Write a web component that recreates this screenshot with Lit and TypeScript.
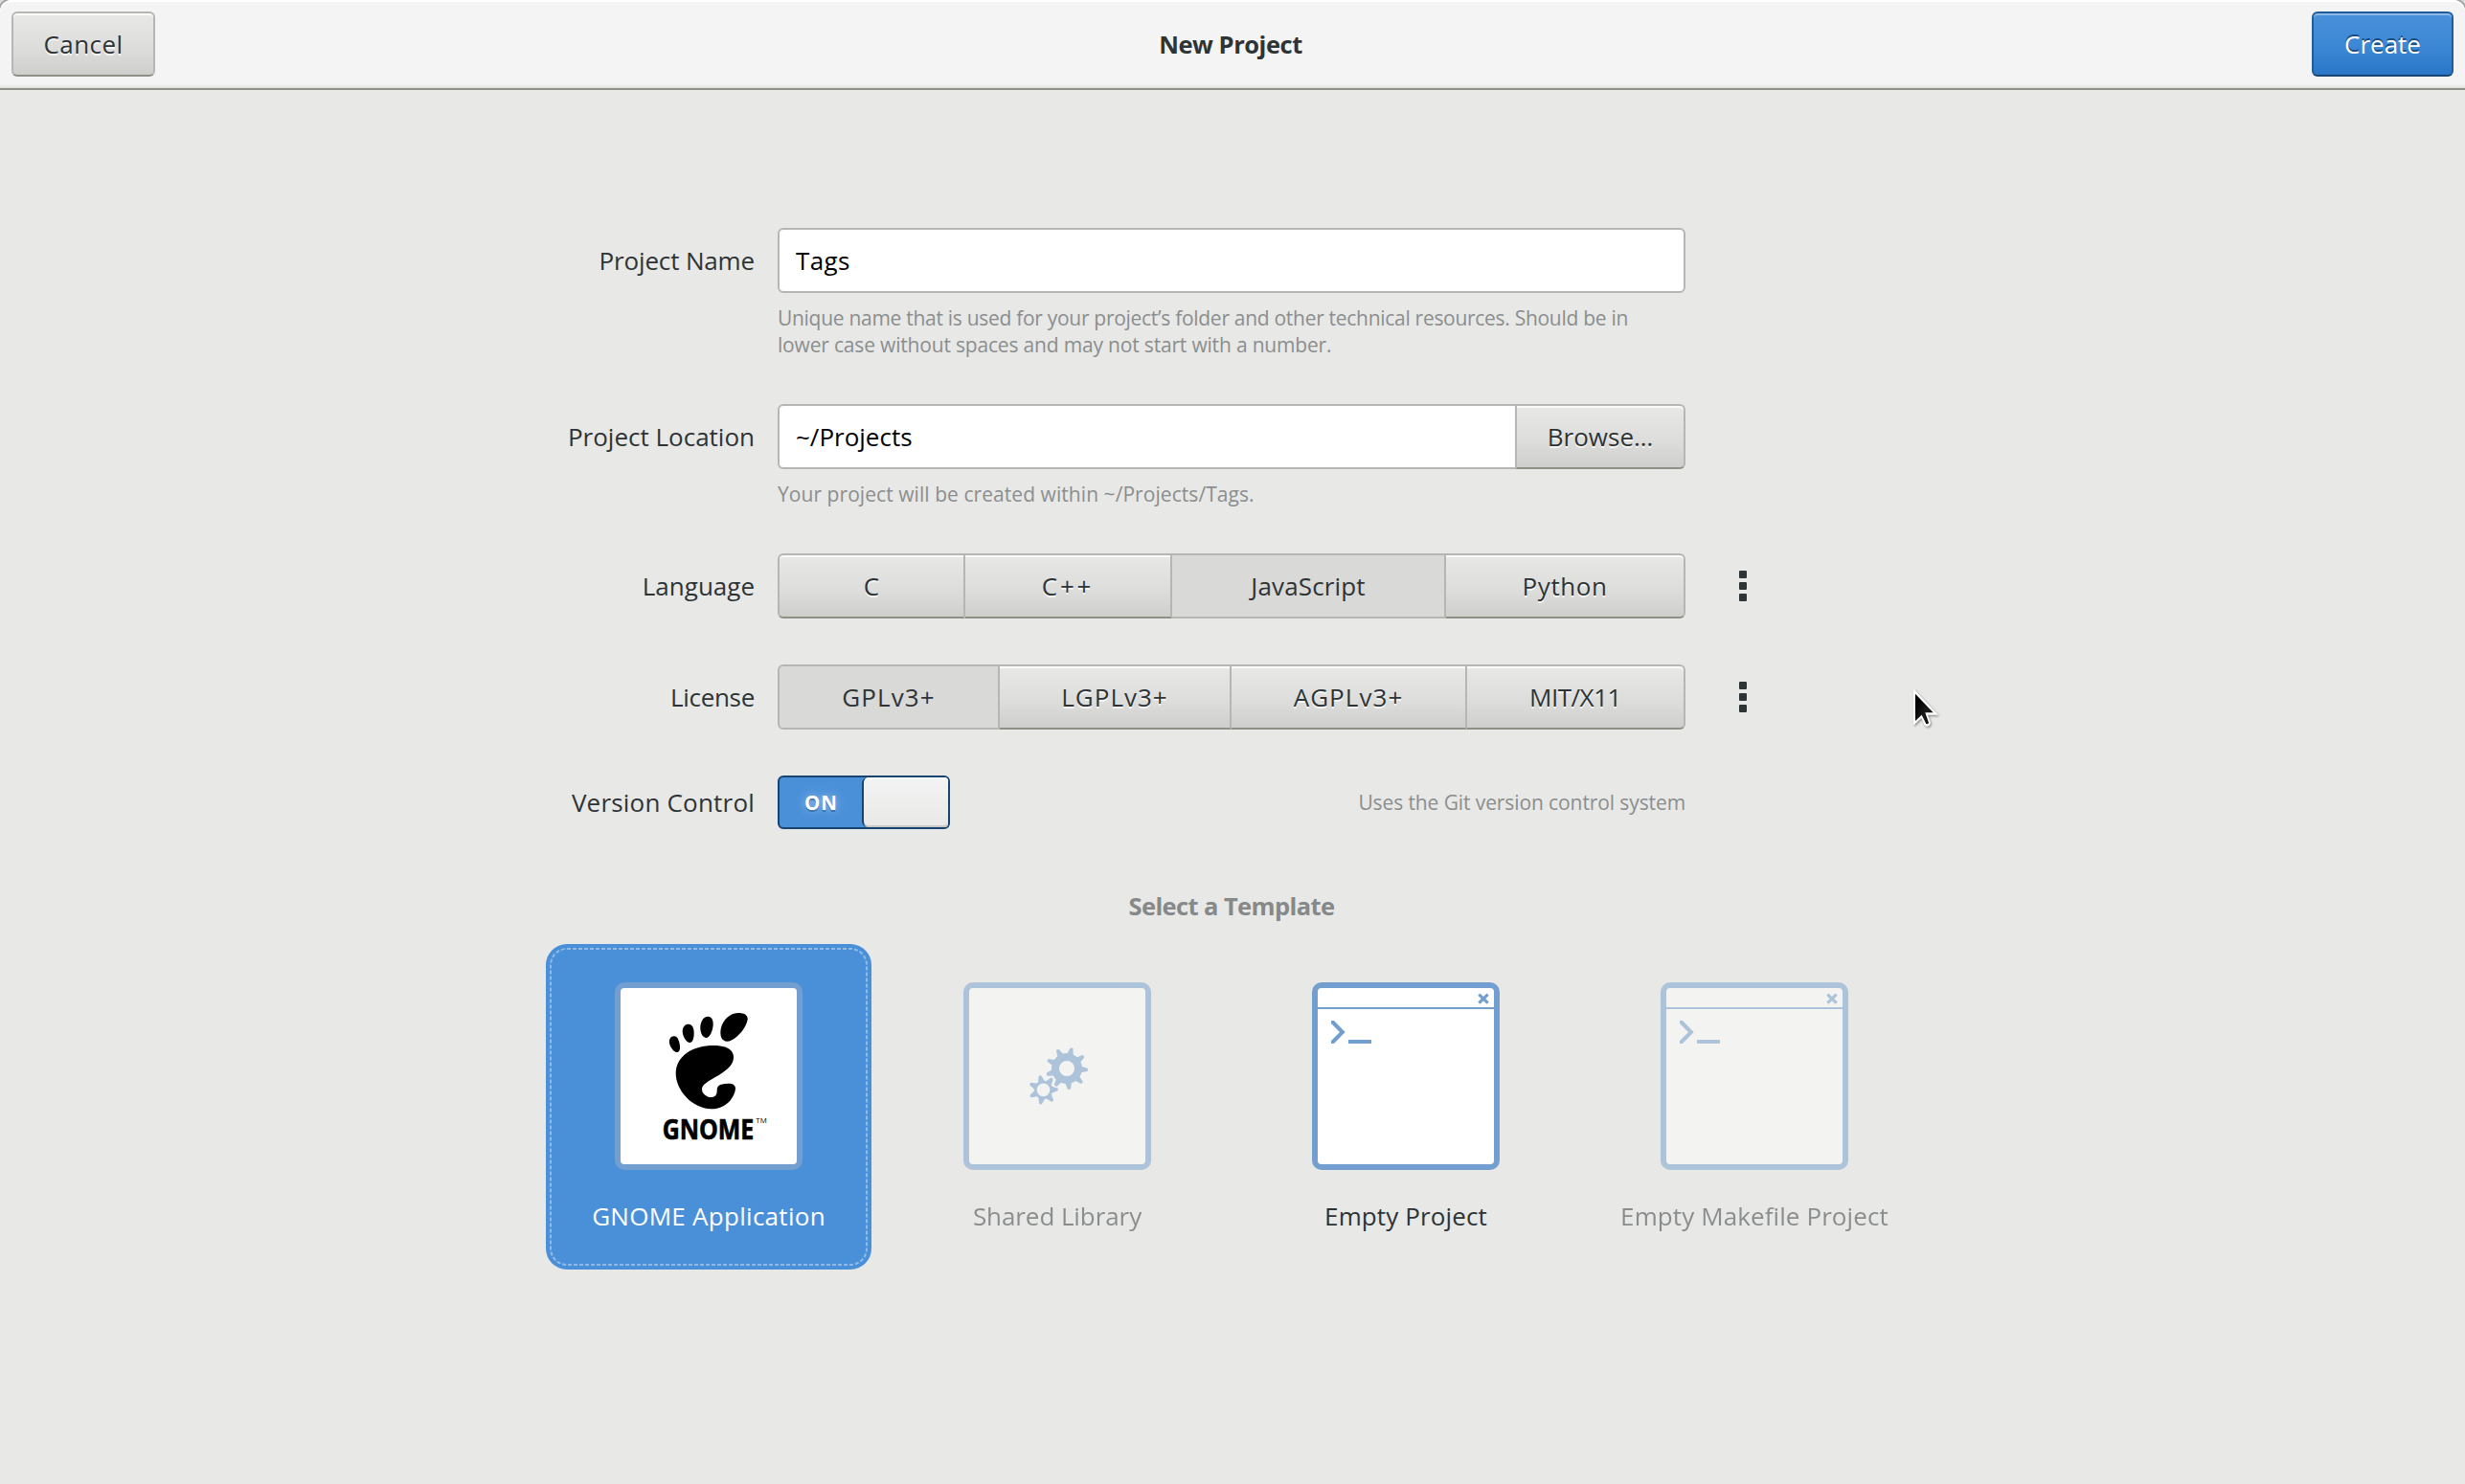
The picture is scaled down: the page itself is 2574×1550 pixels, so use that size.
import { LitElement, html, css, svg } from "lit";
import { customElement, property, state } from "lit/decorators.js";
import { classMap } from "lit/directives/class-map.js";

interface Segment {
  label: string;
  width: number;
  tracking: number;
}

interface Template {
  name: string;
  icon: "gnome" | "gears" | "terminal";
  enabled: boolean;
  tracking: number;
}

const LANGUAGES: Segment[] = [
  { label: "C", width: 196, tracking: 0 },
  { label: "C++", width: 216, tracking: 2.8 },
  { label: "JavaScript", width: 286, tracking: 0.15 },
  { label: "Python", width: 250, tracking: 0.55 },
];

const LICENSES: Segment[] = [
  { label: "GPLv3+", width: 232, tracking: 1.1 },
  { label: "LGPLv3+", width: 242, tracking: 1 },
  { label: "AGPLv3+", width: 246, tracking: 1.05 },
  { label: "MIT/X11", width: 228, tracking: -0.5 },
];

const TEMPLATES: Template[] = [
  { name: "GNOME Application", icon: "gnome", enabled: true, tracking: 0.28 },
  { name: "Shared Library", icon: "gears", enabled: false, tracking: -0.08 },
  { name: "Empty Project", icon: "terminal", enabled: true, tracking: 0.12 },
  { name: "Empty Makefile Project", icon: "terminal", enabled: false, tracking: 0.1 },
];

/** Outline of a cog: wide tooth roots on the body circle, narrow flat tips. */
function cog(cx: number, cy: number, outer: number, body: number, hole: number,
  teeth: number, start: number, tip: number, root: number): string {
  const at = (r: number, a: number) => {
    const t = (a * Math.PI) / 180;
    return `${(cx + r * Math.cos(t)).toFixed(1)} ${(cy + r * Math.sin(t)).toFixed(1)}`;
  };
  let d = "";
  for (let i = 0; i < teeth; i++) {
    const a = start + (i * 360) / teeth;
    const next = a + 360 / teeth;
    d += `${i ? "L" : "M"}${at(body, a - root)}L${at(outer - 2, a - tip)}L${at(outer, a - tip / 2)}`;
    d += `L${at(outer, a + tip / 2)}L${at(outer - 2, a + tip)}L${at(body, a + root)}`;
    d += `A${body} ${body} 0 0 1 ${at(body, next - root)}`;
  }
  return `${d}ZM${cx + hole} ${cy}A${hole} ${hole} 0 1 0 ${cx - hole} ${cy}A${hole} ${hole} 0 1 0 ${cx + hole} ${cy}Z`;
}

@customElement("segmented-buttons")
export class SegmentedButtons extends LitElement {
  @property({ attribute: false }) segments: Segment[] = [];
  @property() selected = "";

  static styles = css`
    :host {
      display: flex;
      height: 68px;
    }
    .segment {
      box-sizing: border-box;
      display: flex;
      align-items: center;
      justify-content: center;
      border: 2px solid #b6b6b3;
      border-left-width: 0;
      border-bottom-color: #8f8f88;
      background: linear-gradient(#e8e8e7, #dcdcda 60%, #cececc);
      box-shadow: inset 0 2px #fbfbfa;
      text-shadow: 0 2px #f6f6f5;
    }
    .segment:first-child {
      border-left-width: 2px;
      border-radius: 6px 0 0 6px;
    }
    .segment:last-child {
      border-radius: 0 6px 6px 0;
    }
    .segment.selected {
      background: #d9d9d7;
      border-bottom-color: #b6b6b3;
      box-shadow: none;
      text-shadow: none;
    }
  `;

  render() {
    return this.segments.map(
      (s) => html`<div
        class=${classMap({ segment: true, selected: s.label === this.selected })}
        style="width:${s.width}px;letter-spacing:${s.tracking}px"
        @click=${() => (this.selected = s.label)}
      >${s.label}</div>`
    );
  }
}

@customElement("template-icon")
export class TemplateIcon extends LitElement {
  @property() kind: Template["icon"] = "terminal";

  static styles = css`
    :host,
    svg {
      display: block;
      width: 196px;
      height: 196px;
    }
    .frame {
      fill: #fff;
      stroke: #729fcf;
      stroke-width: 18;
    }
    .ink {
      fill: #729fcf;
    }
    .gap {
      fill: none;
      stroke: #fff;
      stroke-width: 9;
    }
    .cross {
      stroke: #729fcf;
      stroke-width: 9.5;
    }
    .wordmark {
      font: 700 85px "Open Sans", sans-serif;
      stroke: #000;
      stroke-width: 2;
    }
    .mark {
      font: 400 20px "Open Sans", sans-serif;
    }
  `;

  private glyph() {
    if (this.kind === "gnome") {
      return svg`
        <path d="M185 169C195 168 200 178 203 193C205 205 205 216 197 219C186 220 175 206 171 191C169 179 175 169 185 169Z"/>
        <path d="M231 131C243 131 248 144 248 159C248 175 244 189 235 189C223 188 212 168 212 152C213 139 220 131 231 131Z"/>
        <path d="M292 107C304 107 309 119 308 134C306 154 297 174 286 174C274 173 267 157 268 139C269 121 279 107 292 107Z"/>
        <path d="M387 96C405 96 416 102 416 115C414 142 378 185 351 185C337 185 331 173 331 157C331 124 358 96 387 96Z"/>
        <path d="M310 198C352 198 372 212 372 235C372 262 344 279 319 295C294 310 273 320 273 335C273 348 287 360 302 360C314 360 320 352 320 341C320 325 324 318 355 317C371 317 378 323 378 333C376 360 349 397 302 397C240 394 191 337 191 284C193 230 244 198 310 198Z"/>
        <text class="wordmark" x="149" y="491" textLength="287" lengthAdjust="spacingAndGlyphs">GNOME</text>
        <text class="mark" x="442" y="441" textLength="34" lengthAdjust="spacingAndGlyphs">TM</text>`;
    }
    if (this.kind === "gears") {
      const small = cog(250.5, 337, 46, 29, 20.5, 7, -1, 6, 20);
      return svg`
        <path class="ink" fill-rule="evenodd" d=${cog(324, 270, 66, 48, 24, 9, 3.5, 4.5, 11)}/>
        <path class="gap" d=${small}/>
        <path class="ink" fill-rule="evenodd" d=${small}/>`;
    }
    return svg`
      <rect class="ink" x="12" y="78" width="564" height="6"/>
      <path class="cross" d="M523 38L551 65M551 38L523 65"/>
      <path class="ink" d="M60 120h9l35 36-35 36h-9v-9l27-27-27-27z"/>
      <rect class="ink" x="114" y="180" width="72" height="12"/>`;
  }

  render() {
    return html`<svg viewBox="0 0 588 588">
      <rect class="frame" x="9" y="9" width="570" height="570" rx="21" />
      ${this.glyph()}
    </svg>`;
  }
}

@customElement("app-root")
export class AppRoot extends LitElement {
  @state() private template = "GNOME Application";

  static styles = css`
    :host {
      display: block;
      width: 100%;
      height: 100vh;
      overflow: hidden;
      background: #e8e8e6;
      color: #2e3436;
      font: 26px/36px "Open Sans", "Noto Sans", sans-serif;
      white-space: nowrap;
    }
    .top {
      overflow: hidden;
      background: #dadada;
    }
    .header {
      box-sizing: border-box;
      height: 94px;
      padding: 0 12px;
      display: grid;
      grid-template-columns: 1fr auto 1fr;
      align-items: center;
      border-bottom: 2px solid #8f8f88;
      border-radius: 12px 12px 0 0;
      background: linear-gradient(#f4f4f4 88px, #dededd 92px);
      box-shadow: inset 0 2px #fff, 0 0 0 2px #a0a09c;
    }
    .title {
      padding-right: 4px;
      font-size: 25.5px;
      font-weight: 700;
      letter-spacing: -0.45px;
    }
    .button {
      box-sizing: border-box;
      height: 68px;
      display: flex;
      align-items: center;
      justify-content: center;
      border: 2px solid #b6b6b3;
      border-bottom-color: #8f8f88;
      border-radius: 6px;
      background: linear-gradient(#e8e8e7, #dcdcda 60%, #cececc);
      box-shadow: inset 0 2px #fbfbfa;
      text-shadow: 0 2px #f6f6f5;
    }
    .cancel {
      width: 150px;
      letter-spacing: 0.4px;
    }
    .create {
      width: 148px;
      justify-self: end;
      color: #fff;
      border-color: #215d9c;
      border-bottom-color: #184472;
      background: linear-gradient(#4a90d9, #3a86d5 60%, #2a76c6);
      box-shadow: inset 0 2px #8fbae8;
      text-shadow: 0 -2px #1b4c80;
    }
    .form {
      padding-top: 144px;
      display: flex;
      flex-direction: column;
      gap: 48px;
    }
    .row {
      display: grid;
      grid-template-columns: 788px 948px 8px;
      align-items: center;
      row-gap: 12px;
    }
    .label {
      text-align: right;
    }
    .name-label {
      letter-spacing: -0.15px;
    }
    .license-label {
      letter-spacing: -0.3px;
    }
    .version-label {
      letter-spacing: 0.2px;
    }
    .field {
      grid-column: 2;
      margin-left: 24px;
      margin-right: -24px;
    }
    .more {
      margin-left: 80px;
      display: flex;
      flex-direction: column;
      gap: 4px;
    }
    .dot {
      width: 8px;
      height: 8px;
      border-radius: 1px;
      background: #2e3436;
    }
    .location {
      display: flex;
    }
    .entry {
      box-sizing: border-box;
      height: 68px;
      flex: 1;
      display: flex;
      align-items: center;
      padding: 0 17px;
      border: 2px solid #b6b6b3;
      border-radius: 6px;
      background: #fff;
      color: #000;
    }
    .tags {
      letter-spacing: 0.4px;
    }
    .location .entry {
      border-right-width: 0;
      border-radius: 6px 0 0 6px;
    }
    .browse {
      width: 178px;
      border-radius: 0 6px 6px 0;
    }
    .hint {
      font-size: 21px;
      line-height: 28px;
      color: #8b8e8e;
    }
    .hint-first {
      letter-spacing: -0.29px;
    }
    .hint-rest {
      letter-spacing: -0.18px;
    }
    .path-hint {
      letter-spacing: 0.06px;
    }
    .git {
      display: flex;
      align-items: center;
      justify-content: space-between;
    }
    .git .hint {
      letter-spacing: -0.1px;
    }
    .switch {
      box-sizing: border-box;
      width: 180px;
      height: 56px;
      display: flex;
      border: 2px solid #184472;
      border-radius: 6px;
      background: #4a90d9;
    }
    .on {
      width: 86px;
      padding-left: 1px;
      box-sizing: border-box;
      display: flex;
      align-items: center;
      justify-content: center;
      color: #fff;
      font-size: 20.5px;
      font-weight: 700;
      letter-spacing: 1px;
      text-shadow: 0 2px 0 rgba(24, 68, 114, 0.45), 0 0 10px rgba(255, 255, 255, 0.5);
    }
    .slider {
      flex: 1;
      border-left: 2px solid #184472;
      border-radius: 6px 4px 4px 6px;
      background: linear-gradient(#f4f4f4, #e8e8e7);
      box-shadow: inset 0 2px #fff, inset 0 -2px #c8c8c6;
    }
    .heading {
      margin: 62px 0 22px;
      padding-right: 2px;
      text-align: center;
      font-size: 25.5px;
      font-weight: 700;
      color: #858989;
      letter-spacing: -0.6px;
    }
    .templates {
      display: flex;
      gap: 24px;
      margin-left: 570px;
    }
    .tile {
      box-sizing: border-box;
      position: relative;
      width: 340px;
      height: 340px;
      padding-top: 40px;
      display: flex;
      flex-direction: column;
      align-items: center;
      gap: 30px;
      border-radius: 22px;
    }
    .tile.selected {
      background: #4a90d9;
      color: #fff;
    }
    .focus {
      display: none;
      position: absolute;
      inset: 0;
      width: 340px;
      height: 340px;
      fill: none;
      stroke: #8fbae8;
      stroke-width: 2;
      stroke-dasharray: 4 2;
    }
    .tile.selected .focus {
      display: block;
    }
    .tile.disabled {
      opacity: 0.5;
    }
    .pointer {
      position: absolute;
      left: 1980px;
      top: 700px;
      width: 60px;
      height: 80px;
    }
    .edge {
      fill: #fff;
      filter: drop-shadow(3px 4px 3px rgba(0, 0, 0, 0.4));
    }
  `;

  private more() {
    return html`<div class="more">
      <div class="dot"></div>
      <div class="dot"></div>
      <div class="dot"></div>
    </div>`;
  }

  render() {
    return html`
      <div class="top">
        <div class="header">
          <div class="button cancel">Cancel</div>
          <div class="title">New Project</div>
          <div class="button create">Create</div>
        </div>
      </div>

      <div class="form">
        <div class="row">
          <div class="label name-label">Project Name</div>
          <div class="field entry tags">Tags</div>
          <div class="field hint">
            <div class="hint-first">
              Unique name that is used for your project’s folder and other technical resources. Should be in
            </div>
            <div class="hint-rest">lower case without spaces and may not start with a number.</div>
          </div>
        </div>
        <div class="row">
          <div class="label">Project Location</div>
          <div class="field location">
            <div class="entry">~/Projects</div>
            <div class="button browse">Browse…</div>
          </div>
          <div class="field hint path-hint">Your project will be created within ~/Projects/Tags.</div>
        </div>
        <div class="row">
          <div class="label">Language</div>
          <segmented-buttons class="field" .segments=${LANGUAGES} selected="JavaScript"></segmented-buttons>
          ${this.more()}
        </div>
        <div class="row">
          <div class="label license-label">License</div>
          <segmented-buttons class="field" .segments=${LICENSES} selected="GPLv3+"></segmented-buttons>
          ${this.more()}
        </div>
        <div class="row">
          <div class="label version-label">Version Control</div>
          <div class="field git">
            <div class="switch">
              <div class="on">ON</div>
              <div class="slider"></div>
            </div>
            <div class="hint">Uses the Git version control system</div>
          </div>
        </div>
      </div>

      <div class="heading">Select a Template</div>
      <div class="templates">
        ${TEMPLATES.map(
          (t) => html`<div
            class=${classMap({ tile: true, selected: t.name === this.template, disabled: !t.enabled })}
            @click=${() => t.enabled && (this.template = t.name)}
          >
            <svg class="focus" viewBox="0 0 340 340"><rect x="5" y="5" width="330" height="330" rx="17" /></svg>
            <template-icon kind=${t.icon}></template-icon>
            <div style="letter-spacing:${t.tracking}px">${t.name}</div>
          </div>`
        )}
      </div>

      <svg class="pointer" viewBox="0 0 180 240">
        <defs>
          <linearGradient id="sheen" x1="0" y1="0" x2="1" y2="1">
            <stop offset="0.2" stop-color="#000" />
            <stop offset="0.6" stop-color="#1c1c1c" />
            <stop offset="1" stop-color="#000" />
          </linearGradient>
        </defs>
        <path class="edge" d="M54 57L54 173L79 150L88 170Q95 180 104 173Q110 168 106 158L99 140L132 140Z" />
        <path fill="url(#sheen)" d="M60 74L60 159L80 140L94 168Q99 170 102 165L91 133L116 133Z" />
      </svg>
    `;
  }
}
